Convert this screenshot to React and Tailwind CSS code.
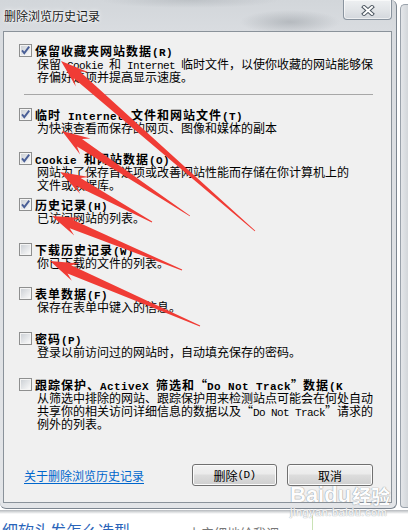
import React from "react";

function Txt({ s, bold }) {
  const out = [];
  const re = /[\x20-\x7e]+|“|”|[^\x20-\x7e“”]+/g;
  let m;
  let i = 0;
  while ((m = re.exec(s))) {
    const t = m[0];
    if (t === "“")
      out.push(
        <span key={i++} className="inline-block w-[12px] text-right">
          “
        </span>
      );
    else if (t === "”")
      out.push(
        <span key={i++} className="inline-block w-[12px] text-left">
          ”
        </span>
      );
    else if (/^[\x20-\x7e]+$/.test(t))
      out.push(
        <span
          key={i++}
          className={
            bold
              ? "font-['Liberation_Mono',monospace] text-[11px] tracking-[0.4px] whitespace-pre"
              : "font-['Liberation_Mono',monospace] text-[11px] tracking-[-0.6px] whitespace-pre"
          }
        >
          {t}
        </span>
      );
    else
      out.push(
        <span key={i++} className={bold ? "tracking-[1px]" : ""}>
          {t}
        </span>
      );
  }
  return out;
}

function Checkbox({ checked }) {
  return (
    <svg width="13" height="13" viewBox="0 0 13 13" className="block">
      <defs>
        <linearGradient id="cbg" x1="0" y1="0" x2="1" y2="1">
          <stop offset="0" stopColor="#cdd1d6" />
          <stop offset="1" stopColor="#f9f9f9" />
        </linearGradient>
      </defs>
      <rect x="0.5" y="0.5" width="12" height="12" fill="#f4f4f4" stroke="#8e8f8f" />
      <rect x="2" y="2" width="9" height="9" fill="url(#cbg)" />
      {checked && (
        <path d="M3 6.3 L5.3 9.1 L10.2 2.7" fill="none" stroke="#4a5f97" strokeWidth="1.9" />
      )}
    </svg>
  );
}

function Item({ checked, label, lines, mt }) {
  return (
    <div className={"flex items-start pl-[15px] " + mt}>
      <div className="h-[13px] w-[13px] shrink-0">
        <Checkbox checked={checked} />
      </div>
      <div className="ml-[3px] leading-[13px] text-[12px] text-black">
        <div className="h-[13px] font-bold whitespace-nowrap">
          <Txt s={label} bold />
        </div>
        {lines.map((l, i) => (
          <div key={i} className="h-[13px] pl-[2px] whitespace-nowrap">
            <Txt s={l} />
          </div>
        ))}
      </div>
    </div>
  );
}

const arrows = [
  [[61, 61], [255, 231]],
  [[62, 131], [190, 216]],
  [[60, 172], [152, 222]],
  [[52, 216], [182, 270]],
  [[50, 261], [200, 326]],
];

function arrowPoints([tx, ty], [ex, ey]) {
  const dx = ex - tx;
  const dy = ey - ty;
  const L = Math.hypot(dx, dy);
  const ux = dx / L;
  const uy = dy / L;
  const nx = -uy;
  const ny = ux;
  const H = 28;
  const W = 9.5;
  const N = 21;
  const S = 4.5;
  const E = 0.4;
  const p = (a, b) => `${(tx + ux * a + nx * b).toFixed(1)},${(ty + uy * a + ny * b).toFixed(1)}`;
  return [p(0, 0), p(H, W), p(N, S), p(L, E), p(L, -E), p(N, -S), p(H, -W)].join(" ");
}

function Button({ children, w }) {
  return (
    <div
      className={
        "h-[22px] flex items-center justify-center rounded-[3px] border border-[#707070] bg-[linear-gradient(180deg,#f2f2f2_0%,#ebebeb_45%,#dddddd_50%,#cfcfcf_100%)] shadow-[inset_0_0_0_1px_#fbfbfb] text-[12px] leading-[13px] text-black " +
        w
      }
    >
      {children}
    </div>
  );
}

export default function App() {
  return (
    <div className="relative w-[408px] h-[530px] overflow-hidden bg-white font-['Noto_Sans_CJK_SC',sans-serif]">
      <div className="flex h-[510px]">
        {/* main dialog window */}
        <div className="w-[397px] h-[509px] flex flex-col rounded-tr-[6px] rounded-b-[6px] border-r border-b border-[#7d8690] bg-[linear-gradient(180deg,#d2d6da_0px,#d9dce0_31px,#e3e5e8_100%)]">
          <div className="h-[31px] flex items-start bg-[radial-gradient(ellipse_50px_12px_at_290px_22px,rgba(140,146,152,0.45),transparent),radial-gradient(ellipse_90px_8px_at_190px_0px,rgba(150,156,162,0.35),transparent)]">
            <div className="pl-[4px] pt-[8px] text-[12px] leading-[16px] text-[#1b1b1b] [text-shadow:0_0_5px_#ffffff,0_0_2px_#ffffff] whitespace-nowrap">
              删除浏览历史记录
            </div>
            <div className="ml-auto mr-[4px] w-[49px] h-[20px] flex items-center justify-center pt-[2px] border-x border-b border-[#8a949f] rounded-b-[4px] bg-[linear-gradient(180deg,#eef0f2_0%,#e2e5e8_50%,#d3d7dc_100%)] shadow-[inset_0_0_0_1px_rgba(255,255,255,0.6)]">
              <svg width="14" height="11" viewBox="0 0 14 11">
                <path d="M3 2 L11 9 M11 2 L3 9" stroke="#4f5963" strokeWidth="4" strokeLinecap="square" />
                <path d="M3 2 L11 9 M11 2 L3 9" stroke="#ffffff" strokeWidth="2" strokeLinecap="square" />
              </svg>
            </div>
          </div>
          {/* client area */}
          <div className="ml-[3px] w-[389px] h-[472px] border border-[#8a929a] bg-[#f0f0f0] flex flex-col">
            <Item
              checked
              mt="mt-[12px]"
              label="保留收藏夹网站数据(R)"
              lines={["保留 Cookie 和 Internet 临时文件，以使你收藏的网站能够保", "存偏好选项并提高显示速度。"]}
            />
            <div className="mt-[11px] ml-[20px] w-[349px] h-px bg-[#a7a7a7]" />
            <Item
              checked
              mt="mt-[13px]"
              label="临时 Internet 文件和网站文件(T)"
              lines={["为快速查看而保存的网页、图像和媒体的副本"]}
            />
            <Item
              checked
              mt="mt-[18px]"
              label="Cookie 和网站数据(O)"
              lines={["网站为了保存首选项或改善网站性能而存储在你计算机上的", "文件或数据库。"]}
            />
            <Item checked mt="mt-[7px]" label="历史记录(H)" lines={["已访问网站的列表。"]} />
            <Item mt="mt-[19px]" label="下载历史记录(W)" lines={["你已下载的文件的列表。"]} />
            <Item mt="mt-[18px]" label="表单数据(F)" lines={["保存在表单中键入的信息。"]} />
            <Item mt="mt-[19px]" label="密码(P)" lines={["登录以前访问过的网站时，自动填充保存的密码。"]} />
            <Item
              mt="mt-[20px]"
              label="跟踪保护、ActiveX 筛选和“Do Not Track”数据(K"
              lines={[
                "从筛选中排除的网站、跟踪保护用来检测站点可能会在何处自动",
                "共享你的相关访问详细信息的数据以及“Do Not Track”请求的",
                "例外的列表。",
              ]}
            />
            <div className="mt-[34px] flex items-center pl-[20px] pr-[18px]">
              <span className="text-[12px] leading-[13px] text-[#0066cc] underline underline-offset-2">
                关于删除浏览历史记录
              </span>
              <div className="ml-auto flex gap-[10px]">
                <Button w="w-[85px]">
                  <Txt s="删除(D)" />
                </Button>
                <Button w="w-[86px]">取消</Button>
              </div>
            </div>
          </div>
        </div>
        {/* window behind */}
        <div className="w-[11px] h-[508px] flex flex-col pt-[4px]">
          <div className="flex-1 ml-[3px] border-l border-t border-b border-[#9aa2ab] rounded-tl-[5px] rounded-bl-[4px] bg-[linear-gradient(90deg,#e4e6e9,#d2d6da)]" />
        </div>
      </div>
      {/* web page below */}
      <div className="h-[20px] flex overflow-hidden bg-[linear-gradient(180deg,#b4b8bc_0px,#ffffff_4px)]">
        <div className="w-[312px] flex items-start pt-[11px]">
          <span className="pl-[2px] w-[188px] text-[16px] leading-[18px] text-[#2a64b9] whitespace-nowrap">细软头发怎么选型</span>
          <span className="pt-[4px] text-[13px] leading-[15px] text-[#777777] whitespace-nowrap">上产细地给我调</span>
        </div>
        <div className="mt-[5px] flex-1 border-l border-[#c9e2b5]" />
      </div>

      {/* watermark */}
      <div className="absolute left-[290px] top-[484px] flex flex-col items-start pointer-events-none opacity-90">
        <div className="flex items-end text-white [text-shadow:0_0_1px_#8c9197,0_0_1px_#8c9197]">
          <span className="font-['Liberation_Sans',sans-serif] font-bold text-[22px] leading-[22px]">Bai</span>
          <span className="font-['Liberation_Sans',sans-serif] font-bold text-[22px] leading-[22px]">du</span>
          <span className="ml-[1px] font-bold text-[19px] leading-[21px]">经验</span>
        </div>
        <div className="font-['Liberation_Sans',sans-serif] text-[11px] leading-[12px] text-white tracking-[0.5px] [text-shadow:0_0_1px_#9aa0a6,0_0_1px_#9aa0a6]">
          jingyan.baidu.com
        </div>
      </div>

      {/* red arrows overlay */}
      <svg className="absolute left-0 top-0 pointer-events-none" width="408" height="530" viewBox="0 0 408 530">
        {arrows.map((a, i) => (
          <polygon key={i} points={arrowPoints(a[0], a[1])} fill="#f03c35" />
        ))}
      </svg>
    </div>
  );
}
